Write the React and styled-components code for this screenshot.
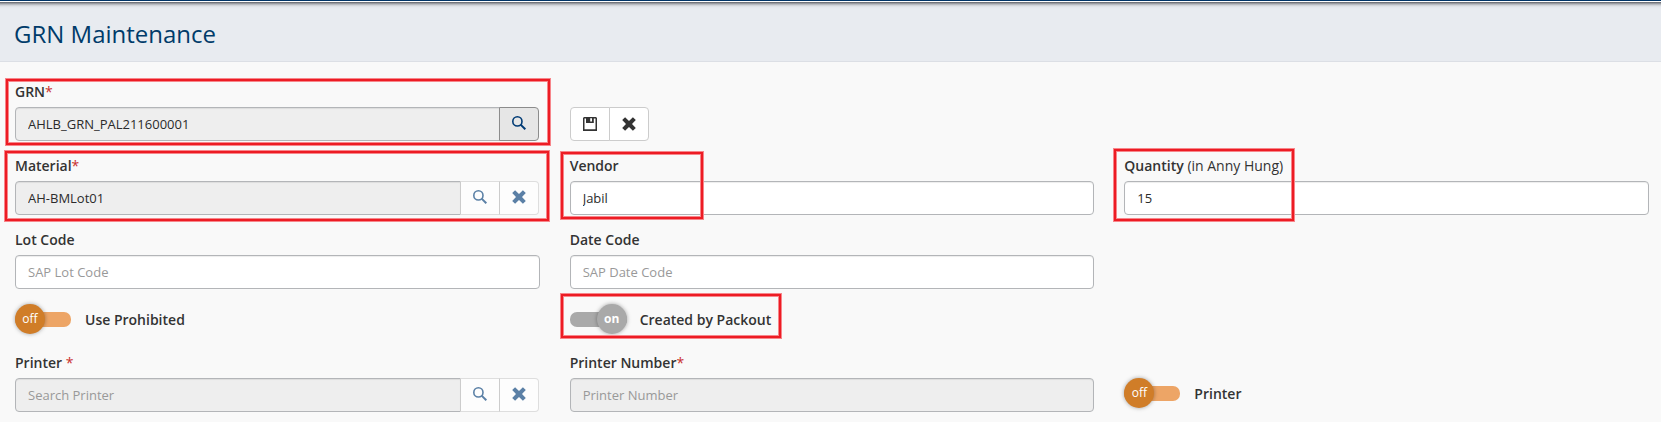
import React from 'react';
import styled, { createGlobalStyle } from 'styled-components';

const Global = createGlobalStyle`
  *, *::before, *::after { box-sizing: border-box; }
  body {
    margin: 0;
    background: #f9f9f9;
    color: #333;
    font: 13px/18px "Open Sans", "Noto Sans", sans-serif;
  }
`;

const Page = styled.div`
  position: relative;
  width: 100%;
  height: 422px;
  overflow: hidden;
`;

const TopStrip = styled.div`
  height: 2px;
  background: #fff;
  border-top: 1px solid #003366;
`;

const Header = styled.header`
  display: flex;
  align-items: center;
  height: 60px;
  padding: 4px 14px 0;
  border-bottom: 1px solid #dcdfe5;
  background: linear-gradient(#5e6168 0, #85888f 1px, #a9acb2 2px, #c8cbd0 3px, #dadde2 4px, #e4e7ec 5px, #e8ebf0 7px);
`;

const Title = styled.h1`
  margin: 0;
  color: #003b6a;
  font-size: 24px;
  line-height: 32px;
  font-weight: 400;
`;

const Form = styled.main`
  display: grid;
  grid-template-columns: repeat(3, 1fr);
  grid-template-rows: 74px 74px 74px 49px 74px;
  column-gap: 30px;
  padding: 19px 12px 0 15px;
`;

const Cell = styled.div`
  grid-column: ${(p) => p.$col};
  grid-row: ${(p) => p.$row};
  padding-top: ${(p) => p.$top || 0}px;
  min-width: 0;
`;

const Label = styled.div`
  height: 26px;
  padding-top: 1px;
  font-size: 14px;
  line-height: 19px;
  font-weight: 600;
  white-space: pre;
`;

const Required = styled.span`
  color: #c9302c;
  font-weight: 400;
`;

const Unit = styled.span`
  font-weight: 400;
`;

const Group = styled.div`
  display: flex;
  padding-right: ${(p) => (p.$inset ? 1 : 0)}px;
`;

const Input = styled.input`
  flex: 1;
  width: 100%;
  min-width: 0;
  height: 34px;
  padding: 0 12px;
  border: 1px solid #b3b5b8;
  border-radius: ${(p) => (p.$joined ? '4px 0 0 4px' : '4px')};
  background: ${(p) => (p.$locked ? '#eee' : '#fff')};
  box-shadow: inset 0 1px 1px rgba(0, 0, 0, 0.075);
  color: #2b2b2b;
  font: inherit;
  outline: none;
  &::placeholder { color: #999; opacity: 1; }
`;

const IconButton = styled.button`
  display: flex;
  align-items: center;
  justify-content: center;
  width: 40px;
  height: 34px;
  margin-left: -1px;
  padding: 0 0 ${(p) => (p.$active || p.$muted ? 2 : 0)}px;
  border: 1px solid ${(p) => (p.$active ? '#8c8c8c' : p.$muted ? '#dedede' : '#ccc')};
  border-left-color: ${(p) => (p.$active ? '#8c8c8c' : '#ccc')};
  border-radius: 0;
  background: ${(p) => (p.$active ? '#e6e6e6' : p.$muted ? '#fdfdfd' : '#fff')};
  color: ${(p) => (p.$active ? '#003b75' : p.$muted ? '#5b80a6' : '#333')};
  &:last-child { border-radius: 0 4px 4px 0; }
  &:first-child { margin-left: 0; border-radius: 4px 0 0 4px; }
`;

const ToggleRow = styled.div`
  display: flex;
  align-items: center;
  height: 30px;
`;

const Track = styled.div`
  display: flex;
  align-items: center;
  justify-content: ${(p) => (p.$on ? 'flex-end' : 'flex-start')};
  width: ${(p) => (p.$on ? 57 : 56)}px;
  height: 15px;
  margin-right: ${(p) => (p.$on ? 13 : 14)}px;
  border-radius: 7px;
  background: ${(p) => (p.$on ? '#a9a9a9' : '#eda566')};
`;

const Knob = styled.div`
  flex: none;
  width: 30px;
  height: 30px;
  border-radius: 50%;
  background: ${(p) => (p.$on ? '#a9a9a9' : '#d07d28')};
  box-shadow: 0 0 4px rgba(0, 0, 0, 0.35);
  color: #fff;
  font-size: 12px;
  line-height: 29px;
  font-weight: ${(p) => (p.$on ? 700 : 400)};
  text-align: center;
`;

const ToggleText = styled.span`
  padding-top: 1px;
  font-size: 14px;
  font-weight: 600;
`;

const Callout = styled.div`
  position: absolute;
  left: ${(p) => p.$x}px;
  top: ${(p) => p.$y}px;
  width: ${(p) => p.$w}px;
  height: ${(p) => p.$h}px;
  border: 1px solid #f7868b;
  pointer-events: none;
  &::before {
    content: '';
    position: absolute;
    inset: 0;
    border: 2px solid #ed1c24;
  }
  &::after {
    content: '';
    position: absolute;
    inset: 2px;
    border: 1px solid #f7868b;
  }
`;

const SearchIcon = () => (
  <svg width="14" height="14" viewBox="0 0 14 14" fill="none" stroke="currentColor">
    <circle cx="5.4" cy="5.4" r="4.6" strokeWidth="1.6" />
    <path d="M8.6 8.6 L13.3 13.3" strokeWidth="2" />
  </svg>
);

const CloseIcon = () => (
  <svg width="14" height="14" viewBox="0 0 14 14" fill="currentColor">
    <path d="M3.1 0.2 L7 4 L10.9 0.2 L13.8 3.1 L10 7 L13.8 10.9 L10.9 13.8 L7 10 L3.1 13.8 L0.2 10.9 L4 7 L0.2 3.1 Z" />
  </svg>
);

const SaveIcon = () => (
  <svg width="14" height="14" viewBox="0 0 14 14" fill="currentColor">
    <path fillRule="evenodd" d="M1 0 H13 L14 1 V14 H0 V1 Z M1.5 1.5 V12.2 H12.5 V1.5 H10.8 V6 H3 V1.5 Z M7.2 1.2 V4.6 H9 V1.2 Z" />
  </svg>
);

const Lookup = ({ value, placeholder }) => (
  <Group $inset>
    <Input $joined $locked readOnly defaultValue={value} placeholder={placeholder} />
    <IconButton $muted><SearchIcon /></IconButton>
    <IconButton $muted><CloseIcon /></IconButton>
  </Group>
);

const Toggle = ({ on, children }) => (
  <ToggleRow>
    <Track $on={on}><Knob $on={on}>{on ? 'on' : 'off'}</Knob></Track>
    <ToggleText>{children}</ToggleText>
  </ToggleRow>
);

export default function App() {
  return (
    <Page>
      <Global />
      <TopStrip />
      <Header><Title>GRN Maintenance</Title></Header>
      <Form>
        <Cell $col={1} $row={1}>
          <Label>GRN<Required>*</Required></Label>
          <Group $inset>
            <Input $joined $locked readOnly defaultValue="AHLB_GRN_PAL211600001" />
            <IconButton $active><SearchIcon /></IconButton>
          </Group>
        </Cell>
        <Cell $col={2} $row={1} $top={26}>
          <Group>
            <IconButton><SaveIcon /></IconButton>
            <IconButton><CloseIcon /></IconButton>
          </Group>
        </Cell>
        <Cell $col={1} $row={2}>
          <Label>Material<Required>*</Required></Label>
          <Lookup value="AH-BMLot01" />
        </Cell>
        <Cell $col={2} $row={2}>
          <Label>Vendor</Label>
          <Group><Input defaultValue="Jabil" /></Group>
        </Cell>
        <Cell $col={3} $row={2}>
          <Label>Quantity <Unit>(in Anny Hung)</Unit></Label>
          <Group><Input defaultValue="15" /></Group>
        </Cell>
        <Cell $col={1} $row={3}>
          <Label>Lot Code</Label>
          <Group><Input placeholder="SAP Lot Code" /></Group>
        </Cell>
        <Cell $col={2} $row={3}>
          <Label>Date Code</Label>
          <Group><Input placeholder="SAP Date Code" /></Group>
        </Cell>
        <Cell $col={1} $row={4} $top={1}><Toggle>Use Prohibited</Toggle></Cell>
        <Cell $col={2} $row={4} $top={1}><Toggle on>Created by Packout</Toggle></Cell>
        <Cell $col={1} $row={5}>
          <Label>Printer <Required>*</Required></Label>
          <Lookup placeholder="Search Printer" />
        </Cell>
        <Cell $col={2} $row={5}>
          <Label>Printer Number<Required>*</Required></Label>
          <Group><Input $locked readOnly placeholder="Printer Number" /></Group>
        </Cell>
        <Cell $col={3} $row={5} $top={26}><Toggle>Printer</Toggle></Cell>
      </Form>
      <Callout $x={5} $y={78} $w={546} $h={68} />
      <Callout $x={4} $y={150} $w={546} $h={72} />
      <Callout $x={560} $y={151} $w={144} $h={69} />
      <Callout $x={1113} $y={148} $w={182} $h={74} />
      <Callout $x={560} $y={293} $w={222} $h={46} />
    </Page>
  );
}
